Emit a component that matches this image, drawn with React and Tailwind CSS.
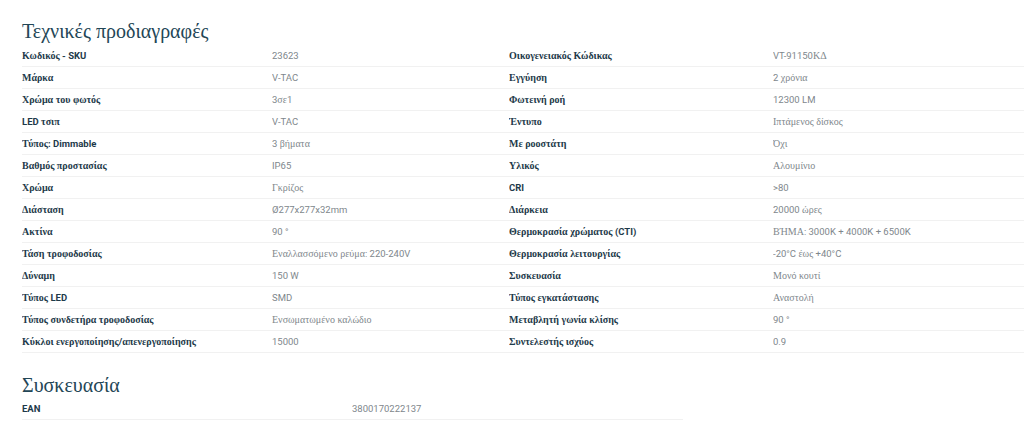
const specs = [
  ['Κωδικός - SKU', '23623', 'Οικογενειακός Κώδικας', 'VT-91150ΚΔ'],
  ['Μάρκα', 'V-TAC', 'Εγγύηση', '2 χρόνια'],
  ['Χρώμα του φωτός', '3σε1', 'Φωτεινή ροή', '12300 LM'],
  ['LED τσιπ', 'V-TAC', 'Έντυπο', 'Ιπτάμενος δίσκος'],
  ['Τύπος: Dimmable', '3 βήματα', 'Με ροοστάτη', 'Όχι'],
  ['Βαθμός προστασίας', 'IP65', 'Υλικός', 'Αλουμίνιο'],
  ['Χρώμα', 'Γκρίζος', 'CRI', '>80'],
  ['Διάσταση', 'Ø277x277x32mm', 'Διάρκεια', '20000 ώρες'],
  ['Ακτίνα', '90 °', 'Θερμοκρασία χρώματος (CTI)', 'ΒΉΜΑ: 3000K + 4000K + 6500K'],
  ['Τάση τροφοδοσίας', 'Εναλλασσόμενο ρεύμα: 220-240V', 'Θερμοκρασία λειτουργίας', '-20°C έως +40°C'],
  ['Δύναμη', '150 W', 'Συσκευασία', 'Μονό κουτί'],
  ['Τύπος LED', 'SMD', 'Τύπος εγκατάστασης', 'Αναστολή'],
  ['Τύπος συνδετήρα τροφοδοσίας', 'Ενσωματωμένο καλώδιο', 'Μεταβλητή γωνία κλίσης', '90 °'],
  ['Κύκλοι ενεργοποίησης/απενεργοποίησης', '15000', 'Συντελεστής ισχύος', '0.9'],
];

function Mixed({ text }) {
  const parts = text.split(/([\u0370-\u03FF\u1F00-\u1FFF]+(?:\s+[\u0370-\u03FF\u1F00-\u1FFF]+)*)/);
  return parts.filter(Boolean).map((part, i) =>
    /[\u0370-\u03FF\u1F00-\u1FFF]/.test(part) ? (
      <span key={i} className="font-['Liberation_Serif',serif] text-[10px]">{part}</span>
    ) : (
      <span key={i} className="font-['Roboto',sans-serif] text-[9.5px]">{part}</span>
    )
  );
}

function Label({ text }) {
  return (
    <div className="truncate font-bold text-[#1e3a4a]">
      <Mixed text={text} />
    </div>
  );
}

function Value({ text }) {
  return (
    <div className="truncate font-normal text-[#80878c]">
      <Mixed text={text} />
    </div>
  );
}

export default function App() {
  return (
    <div className="min-h-[423px] bg-white pl-[22px] pt-[17px] text-[10px]">
      <h2 className="font-['Liberation_Serif',serif] text-[20px] leading-[28px] text-[#234656]">
        Τεχνικές προδιαγραφές
      </h2>
      <div>
        {specs.map(([l1, v1, l2, v2]) => (
          <div key={l1} className="grid h-[22px] grid-cols-[250px_237px_264px_1fr] items-center border-b border-[#f1f1f1]">
            <Label text={l1} />
            <Value text={v1} />
            <Label text={l2} />
            <Value text={v2} />
          </div>
        ))}
      </div>

      <h2 className="mt-[19px] font-['Liberation_Serif',serif] text-[20px] leading-[26px] text-[#234656]">
        Συσκευασία
      </h2>
      <div className="grid h-[22px] w-[661px] grid-cols-[330px_1fr] items-center border-b border-[#f1f1f1]">
        <Label text="EAN" />
        <Value text="3800170222137" />
      </div>
    </div>
  );
}
